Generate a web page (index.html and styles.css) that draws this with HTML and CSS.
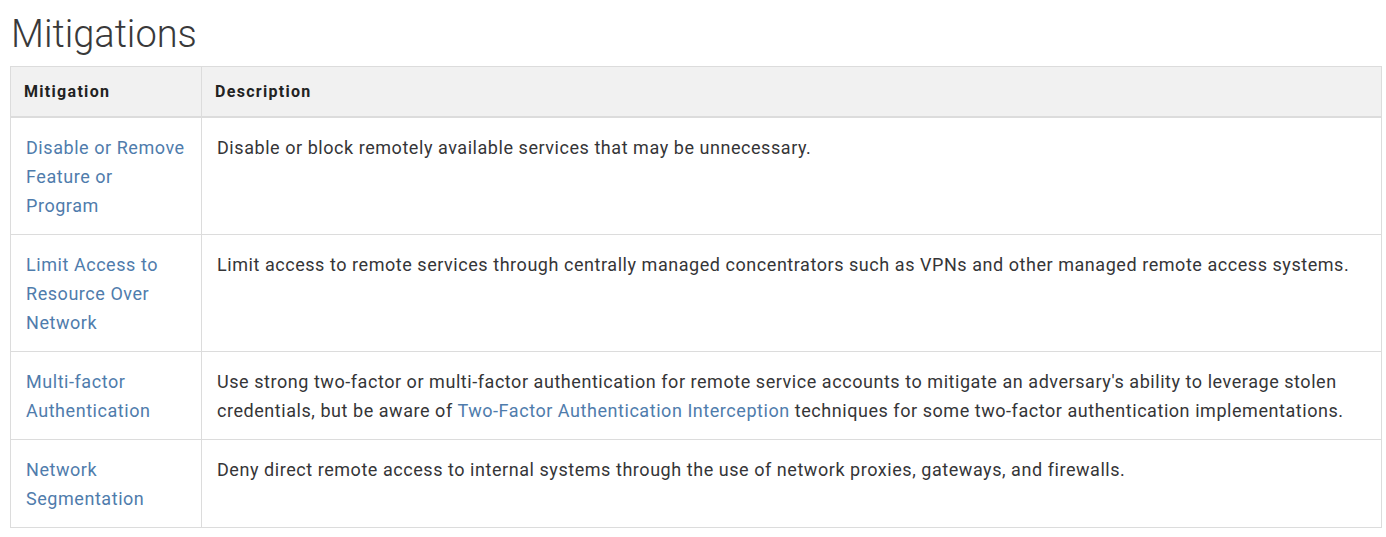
FILE: index.html
```html
<!DOCTYPE html>
<html>
<head>
<meta charset="utf-8">
<link rel="stylesheet" href="styles.css">
</head>
<body>
<h2 class="title">Mitigations</h2>
<table class="mit-table">
  <thead>
    <tr>
      <th class="col-name">Mitigation</th>
      <th>Description</th>
    </tr>
  </thead>
  <tbody>
    <tr>
      <td class="col-name"><a href="#">Disable or Remove Feature or Program</a></td>
      <td>Disable or block remotely available services that may be unnecessary.</td>
    </tr>
    <tr>
      <td class="col-name"><a href="#">Limit Access to Resource Over Network</a></td>
      <td>Limit access to remote services through centrally managed concentrators such as VPNs and other managed remote access systems.</td>
    </tr>
    <tr>
      <td class="col-name"><a href="#">Multi-factor Authentication</a></td>
      <td>Use strong two-factor or multi-factor authentication for remote service accounts to mitigate an adversary's ability to leverage stolen credentials, but be aware of <a href="#">Two-Factor Authentication Interception</a> techniques for some two-factor authentication implementations.</td>
    </tr>
    <tr>
      <td class="col-name"><a href="#">Network Segmentation</a></td>
      <td>Deny direct remote access to internal systems through the use of network proxies, gateways, and firewalls.</td>
    </tr>
  </tbody>
</table>
</body>
</html>
```
FILE: styles.css
```css
body {
  margin: 0;
  padding: 0 5px 0 10px;
  font-family: Roboto, "Liberation Sans", sans-serif;
  color: #353537;
  background: #fff;
}
.title {
  font-weight: 300;
  font-size: 38px;
  line-height: 44px;
  margin: 12px 0 10px 1px;
  color: #39393a;
}
.mit-table {
  width: 1372px;
  border-collapse: collapse;
  font-size: 18px;
  line-height: 29px;
  letter-spacing: 0.55px;
}
.mit-table th,
.mit-table td {
  border: 1px solid #dcdcdc;
  text-align: left;
  vertical-align: top;
}
.mit-table th {
  background: #f1f1f1;
  font-size: 16px;
  font-weight: 700;
  letter-spacing: 1.3px;
  height: 49px;
  padding: 0 13px;
  vertical-align: middle;
  border-bottom: 2px solid #dcdcdc;
  color: #222;
}
.mit-table td {
  padding: 15px 16px 14px 15px;
}
.mit-table .col-name {
  width: 191px;
  box-sizing: border-box;
}
.mit-table td.col-name {
  padding-right: 12px;
}
a {
  color: #4f7cac;
  text-decoration: none;
}
```
